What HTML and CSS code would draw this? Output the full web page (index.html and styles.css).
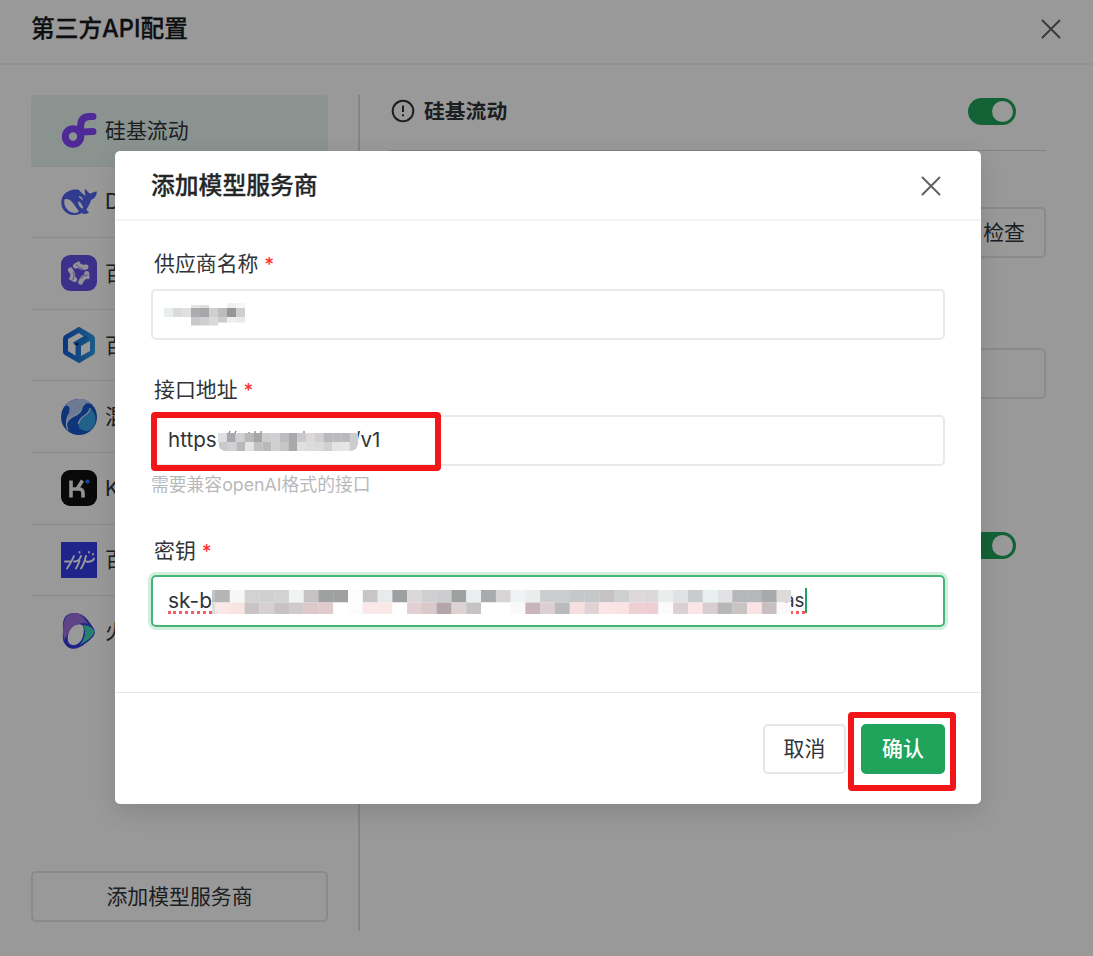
FILE: index.html
```html
<!DOCTYPE html>
<html lang="zh-CN">
<head>
<meta charset="utf-8">
<title>第三方API配置</title>
<link rel="stylesheet" href="styles.css">
</head>
<body>
<div class="page">
  <header class="page-header">
    <h1 class="page-title">第三方API配置</h1>
    <svg class="close" viewBox="0 0 20 20"><path d="M1.500 1.500 18.500 18.500M18.500 1.500 1.500 18.500"/></svg>
  </header>
  <div class="page-body">
    <aside class="sidebar">
      <ul class="providers">
        <li class="provider active">
          <svg class="logo" viewBox="0 0 36 36"><g fill="none" stroke="#8446fb" stroke-width="7" stroke-linecap="round"><circle cx="12" cy="24.500" r="7.700"/><path d="M19.700 25V14Q19.700 4.500 29 4.500H32M20 21Q22 19.500 32 19.500"/></g></svg>
          <span>硅基流动</span>
        </li>
        <li class="provider">
          <svg class="logo" viewBox="0 0 36 36"><path fill="#5265ef" fill-rule="evenodd" d="M18 6C20 8.500 22 10 24.500 12C24 8 23 5.500 24.500 5C26.500 6.500 26.500 8.500 29 9.500C31.500 9 33 7.500 36 7.500C35.500 12 33.500 14.500 30 16C29 20 26.500 23.500 25.500 25.500C26 27.500 28 28 28 28.500C25.500 30.500 22.500 30 20.500 29C14 33 5.500 31 2 25C-1.500 19 .5 10 7 7.500C11 5.500 15 5 18 6ZM3.500 15.500C2 22 6.500 28 13.500 29C16.500 29 18 28 17.500 26.500C15 24 14 21 11 18C9 15.500 6 14.500 3.500 15.500ZM17 17.500C17 20 18.500 23 21 24.500C22.500 24.500 22.500 23.500 21.500 22C20.500 20 19.500 17.500 17 17.500ZM18 12C17.500 14 20 14 21.500 16.500C22.500 16 21 12.500 18 12Z"/></svg>
          <span>DeepSeek</span>
        </li>
        <li class="provider">
          <svg class="logo" viewBox="0 0 36 36"><rect width="36" height="36" rx="9" fill="#6650e8"/><g fill="none" stroke="#f3f2ff" stroke-width="5" stroke-linecap="round"><path d="M14.500 11 17 9.500Q19 13 25 12"/><path d="M14.500 11 17 9.500Q19 13 25 12" transform="rotate(120 18 18)"/><path d="M14.500 11 17 9.500Q19 13 25 12" transform="rotate(240 18 18)"/></g><g fill="none" stroke="#8d7cf0" stroke-width=".8"><path d="M15 9Q17 13 22 14"/><path d="M15 9Q17 13 22 14" transform="rotate(120 18 18)"/><path d="M15 9Q17 13 22 14" transform="rotate(240 18 18)"/></g></svg>
          <span>百炼</span>
        </li>
        <li class="provider">
          <svg class="logo" viewBox="0 0 36 36"><defs><linearGradient id="cube"><stop stop-color="#145bd3"/><stop offset="1" stop-color="#2f9ce4"/></linearGradient></defs><path fill="url(#cube)" fill-rule="evenodd" d="M16 1Q18-1 20 1L32 8Q34 9 34 12V25Q34 27 32 28L20 35Q18 37 16 35L4 28Q2 27 2 25V12Q2 9 4 8ZM18 6 7 12V24L15 29V19L26 12ZM29 14 20 19V29L29 24Z"/><path fill="#1978d8" d="M13.500 18 12 15.500 24 8.500 28 11.500 18.500 17.500V30H14.500V18Z"/><circle cx="16" cy="17" r="1.500" fill="#172348"/></svg>
          <span>百度千帆</span>
        </li>
        <li class="provider">
          <svg class="logo" viewBox="0 0 36 36"><circle cx="18" cy="18" r="18" fill="#1859cc"/><path fill="#b8caf7" d="M20 0A18 18 0 0 0 4 7Q10 5 8 14C5 18 4 24 6 30C4 22 11 19 16 16C22 12 18 7 24 5C30 2 34 8 35 12C32 4 26 0 20 0Z"/><path fill="#37a4e8" d="M29 9C35 14 37 23 31 30C28 32 25 33 22 31C17 30 16 25 19 21C23 17 29 16 29 9Z"/><path fill="none" stroke="#cfe8fa" stroke-width="1.300" d="M24 5C18 7 24 12 15 16C5 19 4 25 7 31M29 9C29 17 18 16 17.500 25"/></svg>
          <span>混元</span>
        </li>
        <li class="provider">
          <svg class="logo" viewBox="0 0 36 36"><rect width="36" height="36" rx="9" fill="#101012"/><path fill="none" stroke="#f4f4f4" stroke-width="3.600" d="M10 10.500V27.500M11 19H17.500Q22 19 22 23V27.500M16 19 21.500 10.500"/><circle cx="26.500" cy="11.500" r="2" fill="#227cff"/></svg>
          <span>Kimi</span>
        </li>
        <li class="provider">
          <svg class="logo" viewBox="0 0 36 36"><path fill="#353de6" d="M0 0H36V36H0Z"/><g fill="none" stroke="#fff" stroke-width="1.900" stroke-linecap="round" stroke-linejoin="round"><path d="M4 19.500H9M13 14Q10 21 6 26.500M13 19.500Q18 20 20 14M18.500 19Q17 23 15 26.500M25 14Q23 22 20 26.500M25 19.500Q31 20.500 33 16.500"/><path d="M18.500 10V10.500M28 10V10.500M32 12V12.500"/></g></svg>
          <span>百川</span>
        </li>
        <li class="provider">
          <svg class="logo" viewBox="0 0 36 36"><path fill="#343de0" d="M2 17C2 10 1 0 14 0C24 0 29 10 33 16C36 20 32 25 25 30C17 37 8 38 4 31C1 27 2 23 2 17Z"/><path fill="#9d70df" d="M2 19C2 7 5 0 14 0C20 0 24 6 27 11Q15 7 7 21L3 27Z"/><path fill="#43d5b5" d="M22 12C28 12 31 15 34 18C32 24 27 27 19 32C25 24 25 18 22 12Z"/><path fill="#fff" d="M15 12C23 9 24 16 22 23C20 31 13 34 9 31C4 27 8 14 15 12Z"/></svg>
          <span>火山引擎</span>
        </li>
      </ul>
      <button class="button add-button">添加模型服务商</button>
    </aside>
    <main class="settings">
      <div class="settings-head">
        <svg class="info" viewBox="0 0 24 24"><circle cx="12" cy="12" r="10.300"/><path d="M12 6.500V13M12 15.200V17.200"/></svg>
        <h2 class="settings-title">硅基流动</h2>
        <i class="switch"></i>
      </div>
      <button class="button check-button">检查</button>
      <div class="field-box"></div>
      <i class="switch lower-switch"></i>
    </main>
  </div>
</div>
<div class="overlay">
  <section class="dialog">
    <header class="dialog-header">
      <h2 class="dialog-title">添加模型服务商</h2>
      <svg class="close" viewBox="0 0 20 20"><path d="M1.500 1.500 18.500 18.500M18.500 1.500 1.500 18.500"/></svg>
    </header>
    <div class="dialog-body">
      <div class="field name-field">
        <label class="label">供应商名称 <b>*</b></label>
        <div class="input"><svg class="mosaic mosaic-name" data-mosaic="name" viewBox="0 0 81 24"></svg></div>
      </div>
      <div class="field url-field">
        <label class="label">接口地址 <b>*</b></label>
        <div class="input url-input"><span class="url-start">https</span><svg class="mosaic mosaic-url" data-mosaic="url" viewBox="0 0 140 21"><path d="M11 3 12 1M17 3 18 1M31 3V2M37 3V1M43 3V1M86 3V1" stroke="#777" stroke-width="1.200"/></svg><span>/v1</span><i class="mark url-mark"></i></div>
        <p class="hint">需要兼容openAI格式的接口</p>
      </div>
      <div class="field key-field">
        <label class="label">密钥 <b>*</b></label>
        <div class="input focused"><span class="misspelt key-start">sk-b</span><svg class="mosaic mosaic-key" data-mosaic="key" viewBox="0 0 579 24"></svg><span class="misspelt key-end">as</span><i class="caret"></i></div>
      </div>
    </div>
    <footer class="dialog-footer">
      <button class="button">取消</button>
      <div class="confirm"><button class="button primary">确认</button><i class="mark confirm-mark"></i></div>
    </footer>
  </section>
</div>
<script src="mosaic.js"></script>
</body>
</html>
```
FILE: styles.css
```css
* { box-sizing: border-box; }
body {
  margin: 0;
  width: 1093px;
  height: 956px;
  overflow: hidden;
  background: #fff;
  color: #303438;
  font: 400 20.9px/30px Inter, "Noto Sans CJK SC", sans-serif;
}
h1, h2, p, ul { margin: 0; padding: 0; }
.page { height: 956px; display: flex; flex-direction: column; }
.page-header {
  height: 65px;
  flex: none;
  display: flex;
  justify-content: space-between;
  padding: 13px 32px 0 31px;
  border-bottom: 2px solid #f3f3f5;
}
.page-title { padding-top: 1px; font-size: 23.7px; line-height: 30px; font-weight: 500; color: #18191b; -webkit-text-stroke: .3px; }
.close { width: 20px; height: 20px; margin-top: 6px; fill: none; stroke: #606364; stroke-width: 2; stroke-linecap: round; }
.page-body { display: flex; padding: 30px 47px 25px 31px; flex: 1; }
.sidebar {
  width: 329px;
  padding: 0 30px 9px 0;
  border-right: 2px solid #dedee4;
  display: flex;
  flex-direction: column;
  justify-content: space-between;
}
.providers { list-style: none; }
.provider {
  height: 71.6px;
  display: flex;
  align-items: center;
  gap: 8px;
  padding-left: 30px;
  border-bottom: 1.5px solid #e8e8eb;
}
.provider span { padding-top: 1px; }
.provider.active { background: #e8f6f0; border-radius: 4px 4px 0 0; border-bottom-color: #e8f0ed; }
.provider:last-child { border-bottom-color: transparent; }
.logo { width: 36px; height: 36px; overflow: visible; }
.button {
  height: 51px;
  padding: 1px 18px 0;
  border: 2px solid #e5e6e8;
  border-radius: 5px;
  background: #fff;
  color: #303438;
  font: inherit;
}
.settings { flex: 1; display: flex; flex-direction: column; align-items: flex-end; padding-left: 29px; }
.settings-head {
  width: 100%;
  height: 56px;
  display: flex;
  align-items: center;
  padding: 0 30px 23px 2px;
  border-bottom: 1px solid #d6d7dc;
}
.info { width: 24px; height: 24px; fill: none; stroke: #303438; stroke-width: 2; }
.settings-title { margin-left: 9px; padding-top: 1px; font-size: 20.8px; font-weight: 700; line-height: 30px; }
.switch { width: 48px; height: 27px; padding: 3px; border-radius: 14px; background: #20a35a; }
.switch::after { content: ""; display: block; width: 21px; height: 21px; margin-left: auto; border-radius: 50%; background: #fff; }
.settings-head .switch { margin-left: auto; }
.check-button { margin-top: 56px; padding-right: 19px; }
.field-box { width: 100%; height: 51px; margin-top: 90px; border: 2px solid #e5e6e8; border-radius: 5px; }
.lower-switch { margin: 133px 30px 0 0; }
.overlay { position: absolute; inset: 0; background: rgba(0, 0, 0, .4); padding: 151px 0 0 115px; }
.dialog {
  width: 866px;
  height: 653px;
  display: flex;
  flex-direction: column;
  border-radius: 5px;
  background: #fff;
  box-shadow: 0 8px 24px rgba(0, 0, 0, .12);
}
.dialog-header {
  height: 70px;
  flex: none;
  display: flex;
  justify-content: space-between;
  padding: 19px 40px 0 36px;
  border-bottom: 2px solid #f4f4f5;
}
.dialog-title { padding-top: 1px; font-size: 23.8px; line-height: 30px; font-weight: 500; color: #242628; -webkit-text-stroke: .3px; }
.dialog-body { flex: 1; padding: 26px 36px 0; }
.field { display: flex; flex-direction: column; }
.name-field { height: 125.5px; }
.url-field { height: 161px; }
.label { height: 42px; padding-left: 3px; line-height: 34px; }
.label b { font-size: 19px; font-weight: 500; color: #f33; }
.input {
  position: relative;
  flex: none;
  height: 51px;
  display: flex;
  align-items: center;
  padding: 0 15px;
  border: 2px solid #e9e9eb;
  border-radius: 5px;
}
.input.focused { height: 52px; margin-top: -1px; border-color: #46b477; box-shadow: 0 0 0 3px #d2eedf; }
.url-start, .key-start, .key-end { flex: none; }
.url-start { width: 50px; }
.url-input { font-size: 20.6px; }
.mosaic { flex: none; position: relative; }
.mosaic-name { width: 81px; height: 24px; margin-left: -4px; }
.mosaic-url { width: 140px; height: 21px; margin: 0 -5px 0 0; border-radius: 0 0 8px 8px; }
.mosaic-key { width: 579px; height: 24px; z-index: 1; margin: 3px 0 0; }
.misspelt { position: relative; height: 27px; line-height: 27px; }
.misspelt::after { content: ""; position: absolute; left: 0; right: 0; bottom: 0; border-bottom: 3px dotted #fb5a60; }
.key-start { width: 44px; }
.key-end { width: 21px; margin-left: -7px; font-size: 18.8px; }
.caret { width: 2px; height: 25px; background: #20a35a; }
.hint { font-size: 17.8px; line-height: 26px; margin-top: 6px; color: #b8b9bb; }
.dialog-footer {
  height: 112px;
  flex: none;
  display: flex;
  justify-content: flex-end;
  align-items: flex-start;
  gap: 15px;
  padding: 31px 36px 0;
  border-top: 1px solid #e8e8ea;
}
.dialog-footer .button { width: 83px; height: 50px; padding-bottom: 1px; }
.confirm { position: relative; }
.dialog-footer .primary { width: 84px; background: #20a35a; border-color: #20a35a; color: #fff; font-weight: 500; display: block; }
.mark { position: absolute; border: 6.500px solid #f21618; border-radius: 4px; }
.url-mark { left: -2px; top: -5px; width: 290px; height: 59px; }
.confirm-mark { left: -13px; top: -12px; width: 108px; height: 79px; }
```
FILE: mosaic.js
```js
// Each row: [x, y, cell width, cell height, colours]
const mosaics = {
  name: [
    [63, 0, 9, 5, "eff0f0 f7f7f7"],
    [27, 2, 9, 3, "e5e5e6 dddddf"],
    [0, 5, 9, 9, "e8eded dedada e0e0e0 acacae a8a8aa d0cfd0 bcbcbe 969696 cfcfd0"],
    [27, 14, 9, 8.5, "c9c8ca cfcfd1 ddd8da"],
    [54, 14, 9, 5.5, "cccbcd eceff0 e9e9ea"]
  ],
  url: [
    [0, 3, 8.8, 9, "dfdfe1 a9a9ab d0d0d2 b9b9bb a6a6a8 cdcdcf d0d0d2 bcbcbe a9a9ab c9c9cb ddd8d8 cfcfd1 b9b9bb bcbcbe b9b9bb cdcdcf"],
    [1, 12, 8.7, 9, "c9c9cb d0d0d2 b9b9bb e4e4e6 c4c0c0 b9b9bb cfcfd1 c9c5c5 a9a9ab e0e0e0 dcdcdc dadada d0d0d2 e3e3e3 e6e6e6 cdcdcd"]
  ],
  key: [
    [0, 0, 3, 12.5, "c4c4c5"],
    [0, 12.5, 3, 11.5, "dddddd"],
    [3, 0, 14.78, 12.5, "b5b5b6 f7f7f7 d3d1d2 d0d0d1 d2d2d3 f1f3f3 c5c2c4 9fa0a0 9fa0a0 fcfcfc c8c5c7 e8ebec 9d9fa0 dcd8da cfcfd1 cbcdcf 9fa1a1 e9eeee a9abad d8d4d5 f0f3f3 e9eeed cbcdcf cbcdcf c5c7c8 c6c7c8 c6c2c4 cdcfd1 ddd8da dcd8da e9eded e1e2e3 c9cbcd e9f0f0 e2e2e4 b6b7b9 b6b7b9 a8a9ab dedada"],
    [3, 12.5, 14.78, 11.5, "fbe7e7 fae3e3 c9c3c5 d6d0d2 c8c2c5 cfcbcc ddc9ca e0cbcc ffffff fcfcfc fbe7e7 fae7e7 ffffff e0d0d2 dac9ca b4a5ad dcd3d2 c5c3c5 ffffff ffffff f9f9f9 c9b5b9 dccfd2 b9babc f7dfe0 e0d2d5 fbe5e6 fbe3e3 edd0d4 edcfd3 fbfbfb dacfd1 fbe5e6 d8cdd0 b7b7ba c9c3c4 fbe3e5 c8bfc2 fbf9f9"]
  ]
};

document.querySelectorAll("[data-mosaic]").forEach((svg) => {
  mosaics[svg.dataset.mosaic].forEach(([x, y, w, h, colours]) => {
    colours.split(" ").forEach((colour, i) => {
      const cell = document.createElementNS("http://www.w3.org/2000/svg", "rect");
      cell.setAttribute("x", x + i * w);
      cell.setAttribute("y", y);
      cell.setAttribute("width", w + 0.2);
      cell.setAttribute("height", h);
      cell.setAttribute("fill", "#" + colour);
      svg.append(cell);
    });
  });
});
```
